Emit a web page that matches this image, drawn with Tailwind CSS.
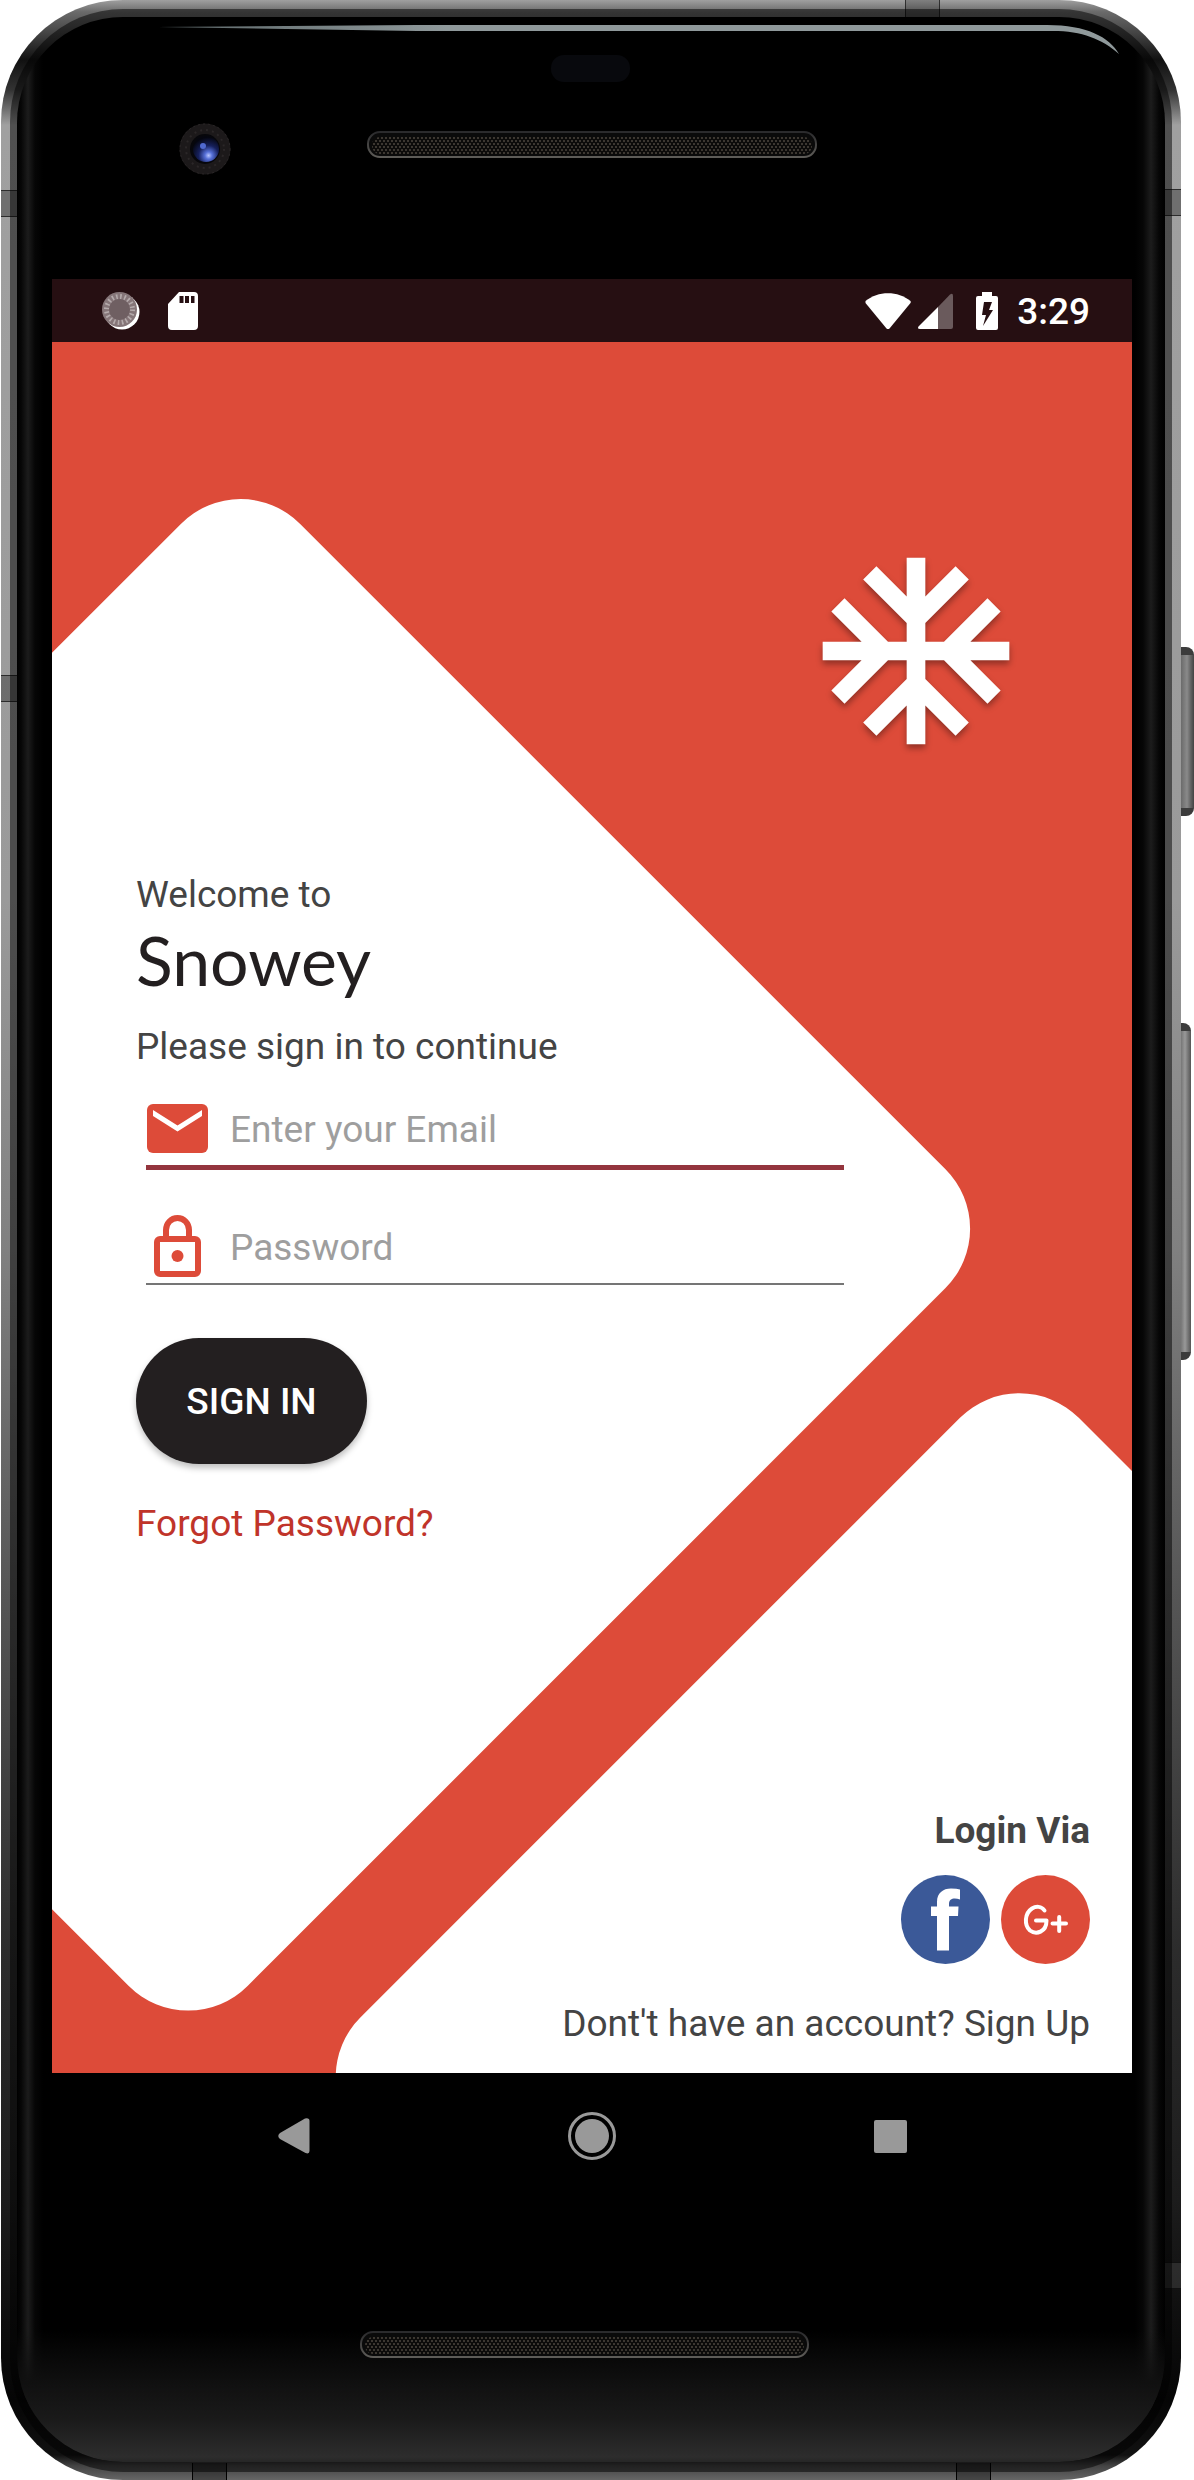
<!DOCTYPE html>
<html lang="en">
<head>
<meta charset="utf-8">
<meta name="viewport" content="width=device-width, initial-scale=1">
<title>Snowey – Sign in</title>
<script src="https://cdn.jsdelivr.net/npm/@tailwindcss/browser@4"></script>
</head>
<body class="bg-white font-[Roboto,sans-serif] text-[37px] leading-[43px] text-[#444444]">
<div class="relative pl-px pr-[13px]">

  <!-- side keys -->
  <div class="absolute right-0 top-[647px] h-[169px] w-[14px] rounded-r-lg bg-linear-to-r from-[#666] via-[#8a8a8a] to-[#444] border-y-8 border-[#3c3c3c]"></div>
  <div class="absolute right-[3px] top-[1023px] h-[337px] w-[12px] rounded-r-lg bg-linear-to-r from-[#666] via-[#999] to-[#555] border-y-8 border-[#3c3c3c]"></div>

  <!-- metal frame -->
  <div class="relative overflow-hidden rounded-[122px] bg-[linear-gradient(180deg,#a0a0a0_0,#6a6a6a_12px,#4a4a4a_30px,#111_60px,#333_90px,#a0a0a0_125px,#9a9a9a_900px,#808080_1250px,#555_1600px,#2c2c2c_1950px,#1c1c1c_2200px,#050505_2400px,#111_2455px,#444_2466px,#666_2480px)] px-[9px] pt-[9px] pb-[8px]">
    <!-- antenna bands -->
    <div class="absolute left-0 top-[190px] h-[27px] w-[17px] border-y border-black/60 bg-black/30"></div>
    <div class="absolute left-0 top-[675px] h-[27px] w-[17px] border-y border-black/60 bg-black/30"></div>
    <div class="absolute right-0 top-[189px] h-[27px] w-[17px] border-y border-black/60 bg-black/30"></div>
    <div class="absolute right-0 bottom-[191px] h-[27px] w-[17px] border-y border-black/60 bg-white/10"></div>
    <div class="absolute right-[241px] top-0 h-[17px] w-[35px] border-x border-black/60 bg-black/20"></div>
    <div class="absolute left-[191px] bottom-0 h-[17px] w-[35px] border-x border-black bg-black/30"></div>
    <div class="absolute right-[190px] bottom-0 h-[17px] w-[35px] border-x border-black bg-black/30"></div>

    <div class="relative rounded-[113px] bg-black/50 px-[7px] pt-[8px] pb-[10px]">
      <!-- glass -->
      <div class="overflow-hidden rounded-[106px] bg-black bg-[linear-gradient(90deg,#000_0,#060606_4px,#1c1c1c_11px,#060606_18px,transparent_26px,transparent_calc(100%-30px),#060606_calc(100%-22px),#1c1c1c_calc(100%-14px),#060606_calc(100%-6px),#000_100%)]">

        <svg class="block h-auto w-full" viewBox="0 0 1148 262" aria-hidden="true">
          <defs>
            <pattern id="mesh" width="4" height="6" patternUnits="userSpaceOnUse">
              <rect width="4" height="6" fill="#0c0b0a"/>
              <rect width="2" height="2" fill="#3c3731"/>
              <rect x="2" y="3" width="2" height="2" fill="#3c3731"/>
            </pattern>
            <linearGradient id="rim" x1="0" y1="0" x2="0" y2="1">
              <stop offset="0" stop-color="#2a2a2c"/><stop offset="1" stop-color="#5e5c58"/>
            </linearGradient>
            <radialGradient id="lens" cx=".6" cy=".75" r=".7">
              <stop offset="0" stop-color="#b9c6ff"/><stop offset=".2" stop-color="#5670d8"/>
              <stop offset=".55" stop-color="#16205c"/><stop offset="1" stop-color="#05060f"/>
            </radialGradient>
            <linearGradient id="fade" x1="0" x2="1" y1="0" y2="0">
              <stop offset="0" stop-color="#5b6668"/><stop offset=".3" stop-color="#8f999b"/><stop offset="1" stop-color="#8f999b"/>
            </linearGradient>
          </defs>
          <path d="M141 10L400 8H1030C1070 8 1092 20 1102 37C1085 22 1065 14 1036 14H400Z" fill="url(#fade)"/>
          <rect x="534" y="38" width="79" height="27" rx="13" fill="#08090d"/>
          <circle cx="188" cy="132" r="25.500" fill="#1c191a"/>
          <circle cx="188" cy="132" r="25" fill="none" stroke="#2b2728" stroke-dasharray="2 3"/>
          <circle cx="188" cy="132" r="19" fill="none" stroke="#2b2728" stroke-width="2" stroke-dasharray="2 4"/>
          <circle cx="188" cy="132" r="15" fill="#07070b"/>
          <circle cx="189" cy="132" r="13" fill="url(#lens)"/>
          <circle cx="186" cy="129" r="3" fill="#5069cf"/>
          <rect x="351" y="115" width="448" height="25" rx="12" fill="#0a0a0a" stroke="url(#rim)" stroke-width="2"/>
          <rect x="355" y="120" width="440" height="17" rx="8" fill="url(#mesh)"/>
        </svg>

        <!-- screen -->
        <div class="ml-[35px] mr-[33px]">
          <header class="flex h-[63px] items-center bg-[#260f12] pl-[50px] pr-[42px] text-white">
            <svg class="h-[38px] w-[38px]" viewBox="0 0 38 38" aria-hidden="true">
              <circle cx="20" cy="20" r="17.500" fill="#fff"/>
              <circle cx="17.500" cy="17.500" r="17.500" fill="#857578"/>
              <circle cx="17.500" cy="17.500" r="13" fill="none" stroke="#b5abac" stroke-width="5" stroke-dasharray="1.600 2.500"/>
              <circle cx="17.500" cy="17.500" r="10.500" fill="#6f5f62"/>
            </svg>
            <svg class="ml-[28px] h-[38px] w-[30px]" viewBox="0 0 30 38" aria-hidden="true">
              <path fill="#fff" fill-rule="evenodd" d="M11 0H26a4 4 0 0 1 4 4V34a4 4 0 0 1-4 4H4a4 4 0 0 1-4-4V12ZM11.500 4v7h4V4Zm5.500 0v7h4V4Zm6 0v7h3.500V4Z"/>
            </svg>
            <svg class="ml-auto h-[36px] w-[46px]" viewBox="0 0 46 36" aria-hidden="true">
              <path fill="#fff" d="M0.500 8C13-2.500 33-2.500 45.500 8Q46 9 45.500 10L24.500 35.500Q23 36.500 21.500 35.500L.500 10Z"/>
            </svg>
            <svg class="ml-[7px] h-[36px] w-[35px]" viewBox="0 0 35 36" aria-hidden="true">
              <path fill="#6a5a5c" d="M20 14L32 1.500Q35-.500 35 3V34a2 2 0 0 1-2 2H20Z"/>
              <path fill="#fff" d="M20 14V36H2Q-1 36 .500 33.500Z"/>
            </svg>
            <svg class="ml-[23px] h-[38px] w-[22px]" viewBox="0 0 22 38" aria-hidden="true">
              <path fill="#fff" fill-rule="evenodd" d="M6 0H16V4H20a2 2 0 0 1 2 2V36a2 2 0 0 1-2 2H2a2 2 0 0 1-2-2V6a2 2 0 0 1 2-2H6ZM8 10L6 23h4L7 34 17 18H13L16 10Z"/>
            </svg>
            <time class="ml-[19px] pt-px font-medium">3:29</time>
          </header>

          <main class="relative overflow-hidden bg-[#dd4b39]">
            <svg class="absolute inset-0 h-full w-full" viewBox="52 342 1080 1731" preserveAspectRatio="none" aria-hidden="true">
              <rect x="-326" y="677" width="1081" height="1155" rx="84" fill="#fff" transform="rotate(45 214 1254.500)"/>
              <rect x="502" y="1591.500" width="1081" height="1016" rx="84" fill="#fff" transform="rotate(45 1042 2099.500)"/>
            </svg>

            <div class="relative flex flex-col pl-[84px] pr-[42px] pt-[197px] pb-[28px]">
              <svg class="mr-[62px] size-[224px] self-end drop-shadow-[0_4px_3px_rgba(0,0,0,0.35)]" viewBox="0 0 24 24" role="img" aria-label="Snowflake">
                <path fill="#fff" d="M22 11h-4.170l3.240-3.240-1.410-1.420L15 11h-2V9l4.660-4.660-1.420-1.410L13 6.170V2h-2v4.170L7.760 2.930 6.340 4.340 11 9v2H9L4.340 6.340 2.930 7.760 6.170 11H2v2h4.170l-3.240 3.240 1.410 1.420L9 13h2v2l-4.660 4.660 1.420 1.410L11 17.830V22h2v-4.170l3.240 3.240 1.420-1.410L13 15v-2h2l4.660 4.660 1.410-1.420L17.830 13H22z"/>
              </svg>

              <form class="mt-[110px] flex flex-col items-start">
                <p>Welcome to</p>
                <h1 class="font-[Lato,sans-serif] text-[68px] leading-[87px] text-[#231f20]">Snowey</h1>
                <p class="mt-[22px]">Please sign in to continue</p>

                <div class="mt-[23px] ml-[10px] flex w-full max-w-[698px] items-center border-b-5 border-[#94353e]">
                  <label for="email" class="flex h-[74px] w-[84px] shrink-0 items-center pl-px" aria-label="Email">
                    <svg class="h-[49px] w-[61px]" viewBox="0 0 61 49" aria-hidden="true">
                      <rect width="61" height="49" rx="6" fill="#dd4b39"/>
                      <path fill="#fff" d="M6 6L30.500 21.500 55 6V12L30.500 27.500 6 12Z"/>
                    </svg>
                  </label>
                  <input id="email" type="email" placeholder="Enter your Email" class="h-[47px] min-w-0 flex-1 bg-transparent pt-[2px] leading-[43px] text-[#444] outline-none placeholder:text-[#9e9e9e]">
                </div>

                <div class="mt-[39px] ml-[10px] flex w-full max-w-[698px] items-center border-b-2 border-[#757575]">
                  <label for="password" class="flex h-[74px] w-[84px] shrink-0 items-center pl-[8px]" aria-label="Password">
                    <svg class="h-[62px] w-[47px]" viewBox="0 0 47 62" aria-hidden="true">
                      <g fill="none" stroke="#dd4b39" stroke-width="6">
                        <rect x="3" y="24" width="41" height="35" rx="3"/>
                        <path d="M12 24V15a11.500 12 0 0 1 23 0V24"/>
                      </g>
                      <circle cx="23.500" cy="41" r="6" fill="#dd4b39"/>
                    </svg>
                  </label>
                  <input id="password" type="password" placeholder="Password" class="h-[47px] min-w-0 flex-1 bg-transparent pt-[2px] leading-[43px] text-[#444] outline-none placeholder:text-[#9e9e9e]">
                </div>

                <button type="submit" class="mt-[53px] h-[126px] w-[231px] rounded-full bg-[#231f20] font-medium text-white shadow-[0_4px_6px_rgba(0,0,0,0.25)]">SIGN IN</button>
                <a href="#forgot" class="mt-[38px] text-[#c0342a]">Forgot Password?</a>
              </form>

              <section class="mt-[264px] flex flex-col items-end">
                <h2 class="font-bold">Login Via</h2>
                <div class="mt-[23px] flex gap-[11px]">
                  <a href="#facebook" aria-label="Facebook">
                    <svg class="size-[89px]" viewBox="0 0 89 89" aria-hidden="true">
                      <circle cx="44.500" cy="44.500" r="44.500" fill="#3b5998"/>
                      <path fill="#fff" d="M36 75.500V41H30V31.500H36V27C36 18 42 13.500 50 13.500Q56 13.500 59 14.500V24.500C53 22.500 48 23.500 48 29V31.500H57.500L57 41H48V75.500Z"/>
                    </svg>
                  </a>
                  <a href="#google-plus" aria-label="Google Plus">
                    <svg class="size-[89px]" viewBox="0 0 89 89" aria-hidden="true">
                      <circle cx="44.500" cy="44.500" r="44.500" fill="#dd4b39"/>
                      <path fill="none" stroke="#fff" stroke-width="4" stroke-linecap="round" stroke-linejoin="round" d="M43.500 35.500C40.500 31 35 31 31 33.500C23.500 38.500 23 50 29 55.500C35 60 45.500 57.500 45.500 45.500H35M51.500 48.500H65M58.200 42V56"/>
                    </svg>
                  </a>
                </div>
                <a href="#signup" class="mt-[38px]">Dont't have an account? Sign Up</a>
              </section>
            </div>
          </main>

          <nav class="mx-auto grid h-[126px] max-w-[894px] grid-cols-3 items-center justify-items-center" aria-label="System">
            <button type="button" aria-label="Back">
              <svg class="block h-[36px] w-[32px]" viewBox="0 0 32 36"><path fill="#999" d="M2 15L27 .500Q31.500-.500 31.500 3V33Q31.500 36.500 27.500 35L2 21Q-1.500 18 2 15Z"/></svg>
            </button>
            <button type="button" aria-label="Home">
              <svg class="block size-[48px]" viewBox="0 0 48 48"><circle cx="24" cy="24" r="22.500" fill="none" stroke="#999" stroke-width="3"/><circle cx="24" cy="24" r="17" fill="#999"/></svg>
            </button>
            <button type="button" aria-label="Recent apps">
              <svg class="block size-[33px]" viewBox="0 0 33 33"><rect width="33" height="33" rx="2" fill="#999"/></svg>
            </button>
          </nav>
        </div>

        <div class="bg-[linear-gradient(180deg,transparent_50%,#101010_70%,#1a1a1a_84%,#2d2d2d_98%,#262626_100%)]">
          <svg class="block h-auto w-full" viewBox="0 0 1148 263" aria-hidden="true">
            <rect x="344" y="133" width="447" height="25" rx="12" fill="#0a0a0a" stroke="url(#rim)" stroke-width="2"/>
            <rect x="348" y="138" width="439" height="17" rx="8" fill="url(#mesh)"/>
          </svg>
        </div>
      </div>
    </div>
  </div>
</div>
</body>
</html>
